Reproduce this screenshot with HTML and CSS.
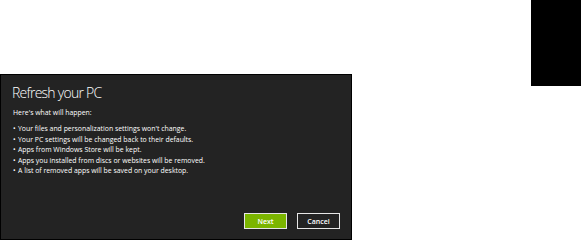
FILE: index.html
```html
<!DOCTYPE html>
<html lang="en">
<head>
    <meta charset="UTF-8">
    <meta name="viewport" content="width=device-width, initial-scale=1.0">
    <title>Refresh your PC</title>
    <link rel="stylesheet" href="styles.css">
</head>
<body>
    <div class="page">
        <div class="dialog">
            <h1>Refresh your PC</h1>
            <p class="intro">Here's what will happen:</p>
            <ul class="changes">
                <li>Your files and personalization settings won't change.</li>
                <li>Your PC settings will be changed back to their defaults.</li>
                <li>Apps from Windows Store will be kept.</li>
                <li>Apps you installed from discs or websites will be removed.</li>
                <li>A list of removed apps will be saved on your desktop.</li>
            </ul>
            <div class="button-group">
                <button type="button" class="btn btn-next">Next</button>
                <button type="button" class="btn btn-cancel">Cancel</button>
            </div>
        </div>
        <div class="tab"></div>
    </div>
</body>
</html>
```
FILE: styles.css
```css
html, body {
    margin: 0;
    padding: 0;
    background-color: #fff;
}
body {
    font-family: 'Open Sans', 'Noto Sans', sans-serif;
    width: 581px;
    height: 240px;
    overflow: hidden;
}
.page {
    display: flex;
    justify-content: space-between;
    align-items: flex-start;
}
.dialog {
    margin-top: 74px;
    width: 352px;
    height: 166px;
    box-sizing: border-box;
    background-color: #232323;
    border: 1px solid #000;
    padding: 9px 11px 10px 11px;
    display: flex;
    flex-direction: column;
    color: #fff;
}
h1 {
    margin: 0;
    font-size: 14px;
    font-weight: 300;
    letter-spacing: -0.75px;
    line-height: 18px;
}
.intro {
    margin: 6px 0 0 1px;
    font-size: 6.9px;
    line-height: 10px;
}
.changes {
    list-style: none;
    margin: 6px 0 0 1px;
    padding: 0;
    font-size: 6.9px;
    line-height: 10.5px;
}
.changes li::before {
    content: "\2022";
    display: inline-block;
    width: 5px;
}
.button-group {
    margin-top: auto;
    display: flex;
    justify-content: flex-end;
    gap: 10px;
}
.btn {
    width: 43px;
    height: 16px;
    padding: 0;
    font-family: inherit;
    font-size: 7px;
    font-weight: 600;
    color: #fff;
    border: 1px solid #e6e6e6;
    box-sizing: border-box;
}
.btn-next {
    background-color: #7bb500;
}
.btn-cancel {
    background-color: #232323;
}
.tab {
    width: 50px;
    height: 86px;
    background-color: #000;
}
```
